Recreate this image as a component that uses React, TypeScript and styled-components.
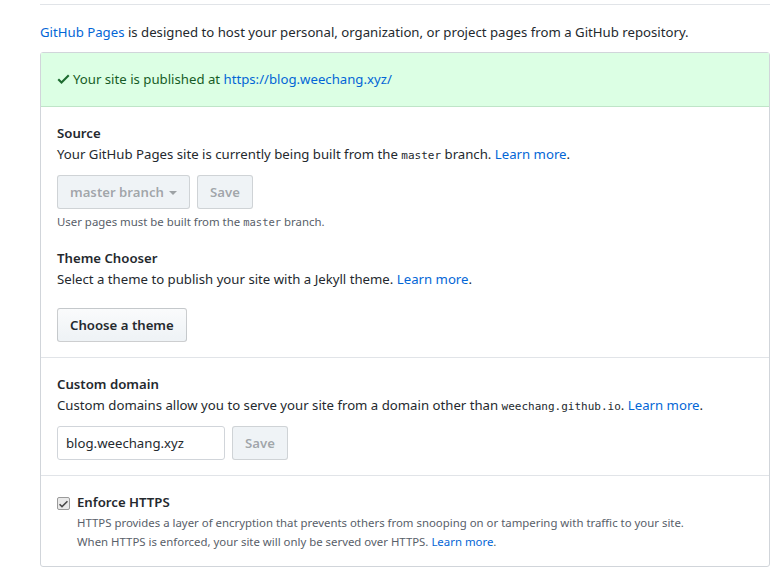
import styled, { createGlobalStyle } from 'styled-components';

const GlobalStyle = createGlobalStyle`
	html, body {
		margin: 0;
		padding: 0;
		background: #fff;
	}
	body {
		font-family: 'Noto Sans', 'Open Sans', sans-serif;
		font-size: 13.2px;
		line-height: 1.5;
		color: #24292e;
	}
`;

const CheckIcon = () => (
	<svg width="12" height="16" viewBox="0 0 12 16" aria-hidden="true">
		<path fill="currentColor" fillRule="evenodd" d="M12 5l-8 8-4-4 1.5-1.5L4 10l6.5-6.5L12 5z" />
	</svg>
);

const App = () => {
	return (
		<>
			<GlobalStyle />
			<Page>
				<TopRule />
				<Intro>
					<Link href="#">GitHub Pages</Link> is designed to host your personal, organization, or project pages
					from a GitHub repository.
				</Intro>
				<Box>
					<Flash>
						<FlashIcon>
							<CheckIcon />
						</FlashIcon>
						Your site is published at <Link href="#">https://blog.weechang.xyz/</Link>
					</Flash>

					<Section>
						<Heading>Source</Heading>
						<Text>
							Your GitHub Pages site is currently being built from the <Code>master</Code> branch.{' '}
							<Link href="#">Learn more</Link>.
						</Text>
						<Row>
							<Button disabled>
								master branch <Caret />
							</Button>
							<Button disabled>Save</Button>
						</Row>
						<Note>
							User pages must be built from the <Code $small>master</Code> branch.
						</Note>

						<Heading $spaced>Theme Chooser</Heading>
						<Text>
							Select a theme to publish your site with a Jekyll theme. <Link href="#">Learn more</Link>.
						</Text>
						<Row $gap={18}>
							<Button>Choose a theme</Button>
						</Row>
					</Section>

					<Section>
						<Heading>Custom domain</Heading>
						<Text>
							Custom domains allow you to serve your site from a domain other than{' '}
							<Code>weechang.github.io</Code>. <Link href="#">Learn more</Link>.
						</Text>
						<Row>
							<DomainInput defaultValue="blog.weechang.xyz" />
							<Button disabled>Save</Button>
						</Row>
					</Section>

					<Section $last>
						<CheckRow>
							<FakeCheck>
								<CheckIcon />
							</FakeCheck>
							<div>
								<Heading>Enforce HTTPS</Heading>
								<Note $tight>
									HTTPS provides a layer of encryption that prevents others from snooping on or tampering with
									traffic to your site.
									<br />
									When HTTPS is enforced, your site will only be served over HTTPS. <Link href="#">Learn more</Link>.
								</Note>
							</div>
						</CheckRow>
					</Section>
				</Box>
			</Page>
		</>
	);
};

export default App;

const Page = styled.div`
	width: 730px;
	padding-left: 40px;
`;

const TopRule = styled.div`
	height: 4px;
	border-bottom: 1px solid #e1e4e8;
`;

const Intro = styled.p`
	margin: 17px 0 9px;
	line-height: 21px;
`;

const Link = styled.a`
	color: #0366d6;
	text-decoration: none;
`;

const Box = styled.div`
	border: 1px solid #d1d5da;
	border-radius: 3px;
`;

const Flash = styled.div`
	padding: 16px 15px;
	line-height: 21px;
	color: #165c26;
	background: #dcffe4;
	border-bottom: 1px solid #bfe5c8;
`;

const FlashIcon = styled.span`
	display: inline-block;
	vertical-align: middle;
	color: #1e6b30;
	margin: -3px 3px 0 1px;
	line-height: 0;
	svg {
		width: 13px;
		height: 16px;
	}
`;

const Section = styled.div<{ $last?: boolean }>`
	padding: 16px 16px 15px;
	border-bottom: ${(p) => (p.$last ? 'none' : '1px solid #e1e4e8')};
`;

const Heading = styled.div<{ $spaced?: boolean }>`
	font-weight: 600;
	line-height: 21px;
	margin-top: ${(p) => (p.$spaced ? '17px' : '0')};
`;

const Text = styled.div`
	line-height: 21px;
`;

const Code = styled.code<{ $small?: boolean }>`
	font-family: 'DejaVu Sans Mono', 'Liberation Mono', monospace;
	font-size: ${(p) => (p.$small ? '10.5px' : '11px')};
	line-height: 0;
`;

const Row = styled.div<{ $gap?: number }>`
	display: flex;
	align-items: center;
	gap: ${(p) => (p.$gap === 18 ? 8 : 7)}px;
	margin-top: ${(p) => p.$gap ?? 10}px;
`;

const Button = styled.button`
	display: inline-flex;
	align-items: center;
	height: 34px;
	padding: 0 12px;
	font-family: inherit;
	font-size: 13.2px;
	font-weight: 600;
	color: #24292e;
	background: linear-gradient(-180deg, #fafbfc 0%, #eff3f6 90%);
	border: 1px solid rgba(27, 31, 35, 0.2);
	border-radius: 3px;
	cursor: pointer;
	&:disabled {
		color: rgba(36, 41, 46, 0.4);
		background: #eff3f6;
		border-color: rgba(27, 31, 35, 0.15);
		cursor: default;
	}
`;

const Caret = styled.span`
	display: inline-block;
	width: 0;
	height: 0;
	margin-left: 5px;
	margin-top: 2px;
	border-top: 4px solid currentColor;
	border-left: 4px solid transparent;
	border-right: 4px solid transparent;
`;

const Note = styled.div<{ $tight?: boolean }>`
	font-size: 11.4px;
	line-height: ${(p) => (p.$tight ? '19px' : '18px')};
	color: #586069;
	margin-top: ${(p) => (p.$tight ? '0' : '4px')};
`;

const DomainInput = styled.input`
	box-sizing: border-box;
	width: 168px;
	height: 34px;
	padding: 0 8px;
	font-family: inherit;
	font-size: 13.2px;
	color: #24292e;
	background: #fff;
	border: 1px solid #d1d5da;
	border-radius: 3px;
	outline: none;
`;

const CheckRow = styled.div`
	display: flex;
	align-items: flex-start;
	gap: 7px;
`;

const FakeCheck = styled.span`
	box-sizing: border-box;
	display: inline-flex;
	align-items: center;
	justify-content: center;
	width: 13px;
	height: 13px;
	margin-top: 5px;
	color: #4a4a4a;
	background: #e9e9e9;
	border: 1px solid #9a9a9a;
	border-radius: 2px;
	svg {
		width: 9px;
		height: 12px;
	}
`;
